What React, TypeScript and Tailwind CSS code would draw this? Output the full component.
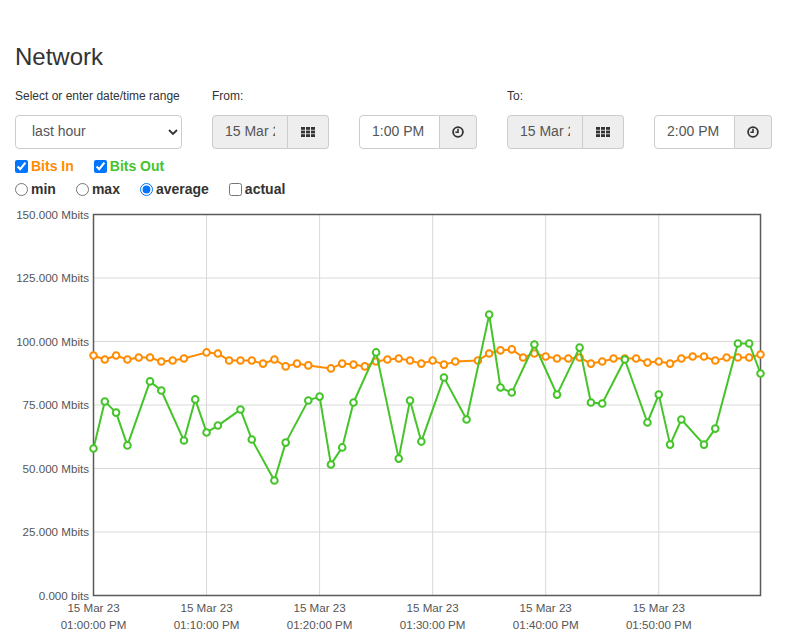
import React from "react"

type Point = [number, number]

const bitsIn: Point[] = [
  [0, 94.5], [1, 92.9], [2, 94.5], [3, 92.9], [4, 93.7], [5, 93.7], [6, 92.1], [7, 92.5], [8, 93.3],
  [10, 95.7], [11, 95.3], [12, 92.5], [13, 92.5], [14, 92.5], [15, 91.3], [16, 92.9], [17, 90.2], [18, 91.3],
  [19, 90.6], [21, 89.4], [22, 91.3], [23, 90.9], [24, 90.2], [25, 92.1], [26, 92.9], [27, 93.3], [28, 92.5],
  [29, 91.3], [30, 92.5], [31, 90.9], [32, 92.1], [34, 92.5], [35, 95.3], [36, 96.5], [37, 96.9], [38, 93.7],
  [39, 95.3], [40, 94.1], [41, 93.3], [42, 93.3], [43, 93.7], [44, 91.3], [45, 92.1], [46, 93.3], [47, 93.3],
  [48, 93.3], [49, 91.7], [50, 92.1], [51, 91.3], [52, 93.3], [53, 94.1], [54, 94.1], [55, 92.5], [56, 93.7],
  [57, 93.7], [58, 93.7], [59, 94.9],
]

const bitsOut: Point[] = [
  [0, 57.9], [1, 76.4], [2, 72.0], [3, 59.1], [5, 84.3], [6, 80.7], [8, 61.0], [9, 77.2], [10, 64.2],
  [11, 66.9], [13, 73.2], [14, 61.4], [16, 45.3], [17, 60.2], [19, 76.8], [20, 78.3], [21, 51.6], [22, 58.3],
  [23, 76.0], [25, 95.7], [27, 53.9], [28, 76.8], [29, 60.6], [31, 85.8], [33, 69.3], [35, 110.6], [36, 81.9],
  [37, 79.9], [39, 98.8], [41, 79.1], [43, 97.6], [44, 76.0], [45, 75.6], [47, 92.9], [49, 68.1], [50, 79.1],
  [51, 59.4], [52, 69.3], [54, 59.4], [55, 65.7], [57, 99.2], [58, 99.2], [59, 87.4],
]

const ORANGE = "#ff8c00"
const GREEN = "#45c42a"

// plot box inside the svg
const W = 757
const H = 430
const L = 78.5
const R = 745.5
const T = 9.5
const B = 390.5

const sx = (m: number) => L + (m * (R - L)) / 59
const sy = (v: number) => B - (v * (B - T)) / 150

const yTicks = [
  { v: 0, label: "0.000 bits" },
  { v: 25, label: "25.000 Mbits" },
  { v: 50, label: "50.000 Mbits" },
  { v: 75, label: "75.000 Mbits" },
  { v: 100, label: "100.000 Mbits" },
  { v: 125, label: "125.000 Mbits" },
  { v: 150, label: "150.000 Mbits" },
]

const xTicks = [0, 10, 20, 30, 40, 50]

const labelStyle: React.CSSProperties = { fontSize: "11.6px", fontFamily: "'Liberation Sans', Arial, sans-serif" }

function Series({ data, color }: { data: Point[]; color: string }) {
  const d = data.map(([m, v], i) => `${i ? "L" : "M"}${sx(m).toFixed(1)},${sy(v).toFixed(1)}`).join(" ")
  return (
    <g>
      <path d={d} fill="none" stroke={color} strokeWidth={2} strokeLinejoin="round" />
      {data.map(([m, v]) => (
        <circle key={m} cx={sx(m)} cy={sy(v)} r={3.3} fill="#fff" stroke={color} strokeWidth={2} />
      ))}
    </g>
  )
}

function NetworkChart() {
  return (
    <svg width={W} height={H} viewBox={`0 0 ${W} ${H}`} className="block">
      {yTicks.slice(1, -1).map((t) => (
        <line key={t.v} x1={L} x2={R} y1={sy(t.v)} y2={sy(t.v)} stroke="#d9d9d9" strokeWidth={1} />
      ))}
      {xTicks.slice(1).map((m) => (
        <line key={m} x1={sx(m)} x2={sx(m)} y1={T} y2={B} stroke="#d9d9d9" strokeWidth={1} />
      ))}
      <rect x={L} y={T} width={R - L} height={B - T} fill="none" stroke="#5a5a5a" strokeWidth={1.5} />

      <Series data={bitsIn} color={ORANGE} />
      <Series data={bitsOut} color={GREEN} />

      {yTicks.map((t) => (
        <text key={t.v} x={74} y={sy(t.v) + 4} textAnchor="end" fill="#555" style={labelStyle}>
          {t.label}
        </text>
      ))}
      {xTicks.map((m) => (
        <g key={m}>
          <text x={sx(m)} y={407} textAnchor="middle" fill="#555" style={labelStyle}>
            15 Mar 23
          </text>
          <text x={sx(m)} y={424} textAnchor="middle" fill="#555" style={labelStyle}>
            {`01:${m === 0 ? "00" : m}:00 PM`}
          </text>
        </g>
      ))}
    </svg>
  )
}

function GridIcon() {
  return (
    <svg width="14" height="10" viewBox="0 0 14 10" fill="#333">
      {[0, 5, 10].map((x) =>
        [0, 3.6, 7.2].map((y) => <rect key={`${x}-${y}`} x={x} y={y} width="4" height="2.8" />)
      )}
    </svg>
  )
}

function ClockIcon() {
  return (
    <svg width="12" height="12" viewBox="0 0 12 12" fill="none" stroke="#333">
      <circle cx="6" cy="6" r="4.9" strokeWidth="1.8" />
      <path d="M6 2.8V6.2H3.4" strokeWidth="1.6" />
    </svg>
  )
}

function DateGroup() {
  return (
    <div className="flex h-[34px] w-[117px]">
      <input
        readOnly
        value="15 Mar 2023"
        className="w-[76px] min-w-0 rounded-l-[4px] border border-[#ccc] bg-[#eee] px-[12px] text-[14px] text-[#555] outline-none"
      />
      <span className="flex w-[41px] items-center justify-center rounded-r-[4px] border border-l-0 border-[#ccc] bg-[#eee]">
        <GridIcon />
      </span>
    </div>
  )
}

function TimeGroup({ value }: { value: string }) {
  return (
    <div className="flex h-[34px] w-[118px]">
      <input
        readOnly
        value={value}
        className="w-[81px] min-w-0 rounded-l-[4px] border border-[#ccc] bg-white px-[12px] text-[14px] text-[#555] outline-none"
      />
      <span className="flex w-[37px] items-center justify-center rounded-r-[4px] border border-l-0 border-[#ccc] bg-[#eee]">
        <ClockIcon />
      </span>
    </div>
  )
}

function Field({ label, children }: { label?: string; children: React.ReactNode }) {
  return (
    <div className="flex flex-col">
      <div className="h-[17px] text-[12px] leading-[17px] text-[#333]">{label}</div>
      <div className="mt-[9.5px]">{children}</div>
    </div>
  )
}

export default function App() {
  return (
    <div className="min-h-[634px] bg-white px-[15px] pt-[44px] font-['Liberation_Sans',Arial,sans-serif] text-[#333]">
      <h3 className="text-[24px] leading-[26.4px]">Network</h3>

      <div className="mt-[18px] flex gap-[30px]">
        <Field label="Select or enter date/time range">
          <div className="relative w-[167px]">
            <select
              defaultValue="hour"
              className="h-[34px] w-full appearance-none rounded-[4px] border border-[#ccc] bg-white pl-[16px] text-[14px] text-[#555] outline-none"
            >
              <option value="hour">last hour</option>
              <option value="day">last day</option>
              <option value="week">last week</option>
            </select>
            <svg className="pointer-events-none absolute right-[4px] top-[14px]" width="10" height="6" viewBox="0 0 10 6">
              <path d="M1 1l4 4 4-4" fill="none" stroke="#333" strokeWidth="1.8" />
            </svg>
          </div>
        </Field>
        <Field label="From:">
          <DateGroup />
        </Field>
        <Field>
          <TimeGroup value="1:00 PM" />
        </Field>
        <Field label="To:">
          <DateGroup />
        </Field>
        <Field>
          <TimeGroup value="2:00 PM" />
        </Field>
      </div>

      <div className="mt-[8px] flex h-[20px] items-center text-[14px] font-bold">
        <label className="mr-[20px] flex items-center">
          <input type="checkbox" defaultChecked className="m-0 mr-[3px] h-[13px] w-[13px]" />
          <span className="text-[#ff8c00]">Bits In</span>
        </label>
        <label className="flex items-center">
          <input type="checkbox" defaultChecked className="m-0 mr-[3px] h-[13px] w-[13px]" />
          <span className="text-[#45c42a]">Bits Out</span>
        </label>
      </div>

      <div className="mt-[2px] flex h-[22px] items-center text-[14px] font-bold text-[#333]">
        <label className="mr-[20px] flex items-center">
          <input type="radio" name="agg" className="m-0 mr-[3px] h-[13px] w-[13px]" />
          <span>min</span>
        </label>
        <label className="mr-[20px] flex items-center">
          <input type="radio" name="agg" className="m-0 mr-[3px] h-[13px] w-[13px]" />
          <span>max</span>
        </label>
        <label className="mr-[20px] flex items-center">
          <input type="radio" name="agg" defaultChecked className="m-0 mr-[3px] h-[13px] w-[13px]" />
          <span>average</span>
        </label>
        <label className="flex items-center">
          <input type="checkbox" className="m-0 mr-[3px] h-[13px] w-[13px]" />
          <span>actual</span>
        </label>
      </div>

      <div className="mt-[4px]">
        <NetworkChart />
      </div>
    </div>
  )
}
